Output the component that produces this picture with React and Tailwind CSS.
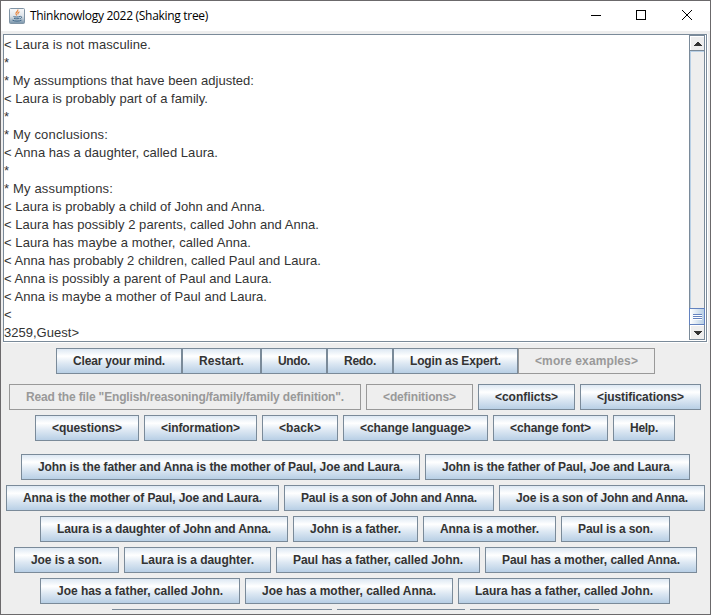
import { useLayoutEffect, useRef } from "react";

const lines = [
  ["< Laura is not masculine.", 147],
  ["*", 0],
  ["* My assumptions that have been adjusted:", 250],
  ["< Laura is probably part of a family.", 204],
  ["*", 0],
  ["* My conclusions:", 104],
  ["< Anna has a daughter, called Laura.", 214],
  ["*", 0],
  ["* My assumptions:", 109],
  ["< Laura is probably a child of John and Anna.", 261],
  ["< Laura has possibly 2 parents, called John and Anna.", 315],
  ["< Laura has maybe a mother, called Anna.", 247],
  ["< Anna has probably 2 children, called Paul and Laura.", 317],
  ["< Anna is possibly a parent of Paul and Laura.", 268],
  ["< Anna is maybe a mother of Paul and Laura.", 263],
  ["<", 0],
  ["3259,Guest>", 75],
];

const toolbar = [
  ["Clear your mind.", 126],
  ["Restart.", 79],
  ["Undo.", 66],
  ["Redo.", 66],
  ["Login as Expert.", 125],
  ["<more examples>", 137, true],
];

const commands = [
  [
    ['Read the file "English/reasoning/family/family definition".', 352, true],
    ["<definitions>", 107, true],
    ["<conflicts>", 97],
    ["<justifications>", 121],
  ],
  [
    ["<questions>", 104],
    ["<information>", 113],
    ["<back>", 76],
    ["<change language>", 145],
    ["<change font>", 115],
    ["Help.", 62],
  ],
];

const sentences = [
  [
    ["John is the father and Anna is the mother of Paul, Joe and Laura.", 399],
    ["John is the father of Paul, Joe and Laura.", 265],
  ],
  [
    ["Anna is the mother of Paul, Joe and Laura.", 273],
    ["Paul is a son of John and Anna.", 210],
    ["Joe is a son of John and Anna.", 206],
  ],
  [
    ["Laura is a daughter of John and Anna.", 248],
    ["John is a father.", 125],
    ["Anna is a mother.", 133],
    ["Paul is a son.", 109],
  ],
  [
    ["Joe is a son.", 105],
    ["Laura is a daughter.", 147],
    ["Paul has a father, called John.", 204],
    ["Paul has a mother, called Anna.", 212],
  ],
  [
    ["Joe has a father, called John.", 200],
    ["Joe has a mother, called Anna.", 208],
    ["Laura has a father, called John.", 212],
  ],
];

// Spreads the letters so that the text takes up the given width.
function FitText({ text, width }) {
  const ref = useRef(null);
  useLayoutEffect(() => {
    const el = ref.current;
    el.style.letterSpacing = "0px";
    if (width) {
      const natural = el.getBoundingClientRect().width;
      el.style.letterSpacing = `${(width - natural) / text.length}px`;
    }
  }, [text, width]);
  return (
    <span ref={ref} className="inline-block whitespace-pre">
      {text}
    </span>
  );
}

function Button({ label, width, disabled }) {
  return (
    <button
      disabled={disabled}
      style={{ width }}
      className={
        "flex h-[26px] shrink-0 items-center border pl-4 text-[12px] leading-[14px] font-bold " +
        (disabled
          ? "border-[#999999] text-[#999999]"
          : "border-[#7a8a99] bg-[linear-gradient(#dde8f3_0%,#ffffff_30%,#dde8f3_60%,#b8cfe5_100%)] text-[#333333]")
      }
    >
      <FitText text={label} width={width - 34} />
    </button>
  );
}

// Rows of even total width get a pixel on the right, which keeps them on whole pixels.
function Row({ items, joined }) {
  const gap = joined ? 0 : 5;
  const total = items.reduce((sum, item) => sum + item[1], 0) + gap * (items.length - 1);
  return (
    <div className={"flex " + (joined ? "gap-0 " : "gap-[5px] ") + (total % 2 === 0 ? "pr-px" : "")}>
      {items.map(([label, width, disabled]) => (
        <Button key={label} label={label} width={width} disabled={disabled} />
      ))}
    </div>
  );
}

function JavaIcon() {
  return (
    <svg width="16" height="16" viewBox="0 0 16 16" fill="none">
      <defs>
        <linearGradient id="tile" x1="0" y1="0" x2="0" y2="1">
          <stop offset="0" stopColor="#f8f9fa" />
          <stop offset="0.5" stopColor="#dfe5ea" />
          <stop offset="1" stopColor="#7793aa" />
        </linearGradient>
      </defs>
      <rect x="0.5" y="0.5" width="15" height="15" rx="1" fill="url(#tile)" stroke="#8094a5" />
      <path d="M8.8 1.5c.8 2-2.6 2.500-1.800 4.500l.8 1.500M10.500 3.800c-1.800.9-2 1.600-1.200 2.600" stroke="#e8833a" strokeWidth="1.100" />
      <path d="M4.500 8.500c1 .7 5 .7 6.500 0M5 10.300c1.500.6 4 .6 5.500 0M11.300 8.300c2 0 1.500 2-.2 2.400M3.500 12.200c2 1.200 7 1.200 9 0" stroke="#41688a" />
    </svg>
  );
}

function Scrollbar() {
  return (
    <div className="mr-px mb-px flex w-[16px] shrink-0 flex-col border-x border-t border-[#7a8a99] bg-[#eeeeee]">
      <div className="flex h-[15px] border-b border-[#7a8a99]">
        <div className="flex flex-1 items-center justify-center border-t border-l border-white pt-px">
          <svg width="8" height="4" viewBox="0 0 8 4" shapeRendering="crispEdges">
            <path d="M3 0h2v1h1v1h1v1h1v1H0V3h1V2h1V1h1z" fill="#333" />
          </svg>
        </div>
      </div>
      <div className="flex-1 border-t border-l border-[#b8cfe5]" />
      <div className="-mx-px flex h-[17px] flex-col border border-[#6382bf] bg-linear-to-r from-white to-[#b8cfe5] pt-[5px] pl-[3px]">
        <div className="h-[2px] w-[9px] border-b border-white bg-[#6382bf]" />
        <div className="h-[2px] w-[9px] border-b border-white bg-[#6382bf]" />
        <div className="h-[2px] w-[9px] border-b border-white bg-[#6382bf]" />
      </div>
      <div className="flex h-[15px] border-b border-[#7a8a99]">
        <div className="flex flex-1 items-center justify-center border-t border-l border-white pt-px">
          <svg width="8" height="4" viewBox="0 0 8 4" shapeRendering="crispEdges">
            <path d="M0 0h8v1H7v1H6v1H5v1H3V3H2V2H1V1H0z" fill="#333" />
          </svg>
        </div>
      </div>
    </div>
  );
}

export default function App() {
  return (
    <div className="flex h-[615px] w-[711px] flex-col overflow-hidden border border-[#6b696b] bg-[#eeeeee] font-['Liberation_Sans',Arial,sans-serif]">
      <header className="flex h-[30px] shrink-0 items-center bg-white pl-2">
        <JavaIcon />
        <h1 className="ml-[5px] font-['Open_Sans','Noto_Sans',sans-serif] text-[12px] text-black">
          <FitText text="Thinknowlogy 2022 (Shaking tree)" width={178} />
        </h1>
        <svg className="ml-auto" width="119" height="30" viewBox="0 0 119 30" fill="none" stroke="#000" shapeRendering="crispEdges">
          <path d="M0 14.500h10" />
          <rect x="45.500" y="9.500" width="9" height="9" />
          <path d="M91 9l10 10M101 9l-10 10" shapeRendering="auto" />
        </svg>
      </header>

      <section className="mt-[3px] ml-[2px] flex h-[309px] w-[705px] shrink-0 border-r border-b border-white">
        <div className="flex w-full border border-[#7a8a99] bg-white">
          <pre className="flex-1 pt-px font-['Liberation_Sans',Arial,sans-serif] text-[13px] leading-[18px] text-[#333333]">
            {lines.map(([text, width], i) => (
              <div key={i} className="h-[18px] overflow-hidden">
                <FitText text={text} width={width} />
              </div>
            ))}
          </pre>
          <Scrollbar />
        </div>
      </section>

      <nav className="mt-[5px] flex flex-col items-center">
        <Row items={toolbar} joined />
      </nav>
      <div className="mt-[10px] flex flex-col items-center gap-[5px]">
        {commands.map((items, i) => (
          <Row key={i} items={items} />
        ))}
      </div>
      <div className="mt-[13px] flex flex-col items-center gap-[5px]">
        {sentences.map((items, i) => (
          <Row key={i} items={items} />
        ))}
        <div className="flex h-px gap-[5px]">
          <div className="w-[220px] bg-[#7a8a99]" />
          <div className="w-[128px] bg-[#7a8a99]" />
          <div className="w-[129px] bg-[#7a8a99]" />
        </div>
      </div>
    </div>
  );
}
